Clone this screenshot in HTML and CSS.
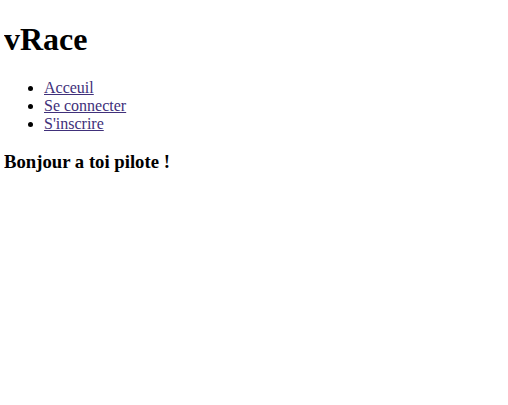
FILE: index.html
```html
<!DOCTYPE html>
<html lang="fr">
<head>
<meta charset="utf-8">
<title>vRace</title>
<link rel="stylesheet" href="styles.css">
</head>
<body class="page">
<h1 class="title">vRace</h1>
<ul class="menu">
<li><a class="menu-link" href="#">Acceuil</a></li>
<li><a class="menu-link" href="#">Se connecter</a></li>
<li><a class="menu-link" href="#">S'inscrire</a></li>
</ul>
<h3 class="greeting">Bonjour a toi pilote !</h3>
</body>
</html>
```
FILE: styles.css
```css
.page {
  margin: 4px;
  font-family: "Liberation Serif", "Times New Roman", serif;
  color: #000;
  background: #fff;
}
.title {
  font-size: 32px;
  margin: 17px 0 21px;
}
.menu {
  margin: 16px 0;
  padding-left: 40px;
}
.menu-link {
  color: #40307a;
}
.greeting {
  font-size: 18.72px;
  margin: 18px 0;
}
```
